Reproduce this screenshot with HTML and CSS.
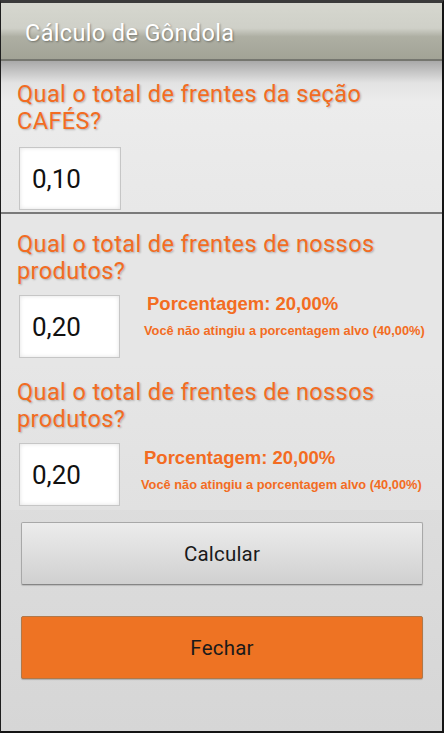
FILE: index.html
```html
<!DOCTYPE html>
<html lang="pt">
<head>
<meta charset="utf-8">
<link rel="stylesheet" href="styles.css">
</head>
<body>
<div class="screen">
  <header class="titlebar"><span class="title">Cálculo de Gôndola</span></header>
  <section class="block first">
    <h2 class="question">Qual o total de frentes da seção CAFÉS?</h2>
    <div class="row">
      <div class="field">0,10</div>
    </div>
  </section>
  <div class="divider"></div>
  <section class="block second">
    <h2 class="question">Qual o total de frentes de nossos produtos?</h2>
    <div class="row">
      <div class="field">0,20</div>
      <div class="result">
        <div class="pct">Porcentagem: 20,00%</div>
        <div class="msg">Você não atingiu a porcentagem alvo (40,00%)</div>
      </div>
    </div>
  </section>
  <section class="block third">
    <h2 class="question">Qual o total de frentes de nossos produtos?</h2>
    <div class="row">
      <div class="field">0,20</div>
      <div class="result shift">
        <div class="pct">Porcentagem: 20,00%</div>
        <div class="msg">Você não atingiu a porcentagem alvo (40,00%)</div>
      </div>
    </div>
  </section>
  <div class="actions">
    <button class="btn calc">Calcular</button>
    <button class="btn close">Fechar</button>
  </div>
</div>
</body>
</html>
```
FILE: styles.css
```css
* { box-sizing: border-box; }
html, body { margin: 0; padding: 0; background: #ffffff; }
body { width: 448px; height: 736px; overflow: hidden; font-family: Roboto, "Noto Sans", sans-serif; }

.screen {
  width: 444px;
  height: 733px;
  border-top: 3px solid #3a3a3a;
  border-left: 1px solid #1e1e1e;
  border-right: 2px solid #141414;
  border-bottom: 2px solid #141414;
  background: linear-gradient(#ececec, #d6d6d6);
  display: flex;
  flex-direction: column;
}

.titlebar {
  height: 58px;
  background: linear-gradient(#d6d7cf 0%, #cfd0c8 45%, #aeafa3 60%, #a2a396 100%);
  border-bottom: 2px solid #75766f;
  display: flex;
  align-items: center;
  padding-left: 24px;
  padding-top: 4px;
}
.title {
  color: #ffffff;
  font-size: 23.5px;
  letter-spacing: 0.35px;
  text-shadow: 1px 1px 2px rgba(0,0,0,0.35);
}

.block { padding: 0 0 0 16px; }
.first {
  background: linear-gradient(#a9a9a9 0px, #e3e3e3 22px, #ececec 40px, #e8e8e8 100%);
  padding-top: 20px;
  height: 151px;
}
.second { padding-top: 17px; height: 148px; background: #e6e6e6; }
.third { padding-top: 17px; height: 148px; background: linear-gradient(#e6e6e6, #e1e1e1); }

.question {
  margin: 0;
  font-weight: 400;
  font-size: 23.5px;
  letter-spacing: 0.4px;
  line-height: 27px;
  color: #f36c22;
  text-shadow: 1px 1px 2px rgba(0,0,0,0.25);
  width: 400px;
}

.row { display: flex; align-items: flex-start; margin-top: 12px; }
.second .row, .third .row { margin-top: 10px; }

.field {
  width: 102px;
  height: 63px;
  margin-left: 2px;
  background: #ffffff;
  border: 1px solid #c6c6c6;
  box-shadow: inset 0 0 4px rgba(0,0,0,0.12);
  font-size: 26px;
  color: #111;
  display: flex;
  align-items: center;
  padding-left: 12px;
}
.second .field, .third .field { width: 101px; }

.result {
  margin-left: 27px;
  font-family: "Liberation Sans", Arial, sans-serif;
  font-weight: 700;
  color: #f36c22;
}
.result.shift { margin-left: 24px; margin-top: 6px; }
.pct { font-size: 18.5px; line-height: 20px; margin-top: -1px; }
.msg { font-size: 12.8px; line-height: 14px; margin-top: 10px; margin-left: -3px; }

.divider { height: 2px; background: #7a7a7a; }

.actions {
  display: flex;
  flex-direction: column;
  padding: 12px 0 0 20px;
  gap: 31px;
}
.btn {
  width: 402px;
  height: 63px;
  border-radius: 2px;
  font-family: Roboto, "Noto Sans", sans-serif;
  font-size: 20.5px;
  letter-spacing: 0.2px;
  color: #1a1a1a;
  padding: 0;
}
.calc {
  background: linear-gradient(#ececec, #d0d0d0);
  border: 1px solid #a8a8a8;
  border-bottom-color: #858585;
  box-shadow: 0 1px 1px rgba(0,0,0,0.15);
}
.close {
  background: #ee7323;
  border: 1px solid #b0784a;
  box-shadow: 0 1px 1px rgba(0,0,0,0.2);
}
```
